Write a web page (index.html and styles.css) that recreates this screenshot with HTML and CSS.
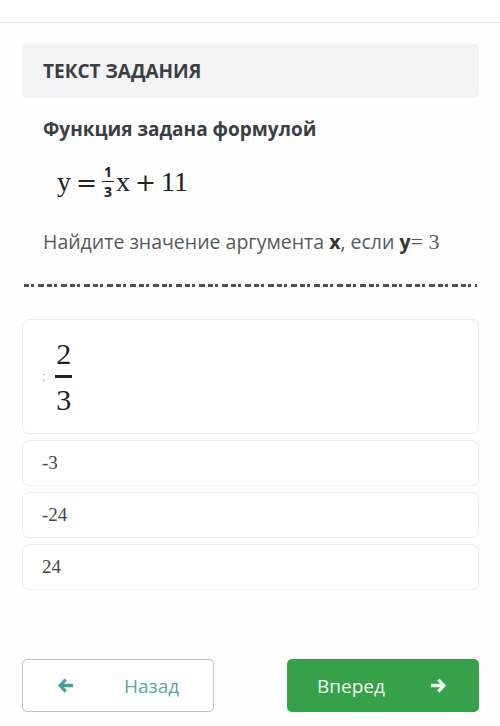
FILE: index.html
```html
<!DOCTYPE html>
<html lang="ru">
<head>
    <meta charset="UTF-8">
    <meta name="viewport" content="width=device-width, initial-scale=1.0">
    <title>Текст задания</title>
    <link rel="stylesheet" href="styles.css">
</head>
<body>
    <div class="top-bar"></div>

    <div class="task">
        <div class="task-header">ТЕКСТ ЗАДАНИЯ</div>

        <div class="task-body">
            <div class="task-title">Функция задана формулой</div>

            <div class="formula">
                <span>y</span>
                <span class="op">=</span>
                <span class="frac small">
                    <span class="num">1</span>
                    <span class="den">3</span>
                </span>
                <span>x</span>
                <span class="op">+</span>
                <span>11</span>
            </div>

            <p class="question">Найдите значение аргумента <b>x</b>, если <b>y</b><span class="math">= 3</span></p>
        </div>

        <div class="separator"></div>

        <div class="answers">
            <div class="answer answer-tall">
                <span class="dots">:</span>
                <span class="frac big">
                    <span class="num">2</span>
                    <span class="den">3</span>
                </span>
            </div>
            <div class="answer">-3</div>
            <div class="answer">-24</div>
            <div class="answer">24</div>
        </div>

        <div class="nav">
            <button class="btn btn-back">
                <svg viewBox="0 0 20 20" width="19" height="19">
                    <path d="M9 2.5 L2 10 L9 17.5 L11.5 15 L8.2 11.8 H18 V8.2 H8.2 L11.5 5 Z" fill="currentColor"/>
                </svg>
                <span>Назад</span>
            </button>
            <button class="btn btn-next">
                <span>Вперед</span>
                <svg viewBox="0 0 20 20" width="19" height="19">
                    <path d="M11 2.5 L18 10 L11 17.5 L8.5 15 L11.8 11.8 H2 V8.2 H11.8 L8.5 5 Z" fill="currentColor"/>
                </svg>
            </button>
        </div>
    </div>
</body>
</html>
```

FILE: styles.css
```css
body {
    margin: 0;
    background: #fdfdfd;
    font-family: 'Open Sans', 'Noto Sans', sans-serif;
    color: #3b4045;
}

.top-bar {
    height: 22px;
    border-bottom: 1px solid #e3e4e6;
    background: #fff;
}

.task {
    padding: 21px 21px 0 22px;
}

.task-header {
    height: 54px;
    display: flex;
    align-items: center;
    padding-left: 21px;
    background: #f1f3f5;
    border-radius: 5px;
    font-size: 19px;
    font-weight: bold;
    color: #3a3f43;
}

.task-body {
    padding: 0 21px;
}

.task-title {
    margin-top: 18px;
    font-size: 19px;
    font-weight: bold;
    color: #3a3f43;
}

.formula {
    display: flex;
    align-items: center;
    gap: 4px;
    margin: 23px 0 0 14px;
    font-family: 'Liberation Serif', 'DejaVu Serif', serif;
    font-size: 28px;
    color: #222;
}

.formula .op {
    margin: 0 1px;
    font-family: 'DejaVu Serif', serif;
    font-size: 25px;
}

.frac {
    display: inline-flex;
    flex-direction: column;
    align-items: center;
    line-height: 1;
}

.frac .num {
    border-bottom: 1px solid #222;
}

.frac.small {
    font-family: 'Open Sans', sans-serif;
    font-size: 14px;
    font-weight: bold;
    margin-right: -2px;
}

.frac.small .num {
    padding: 0 2px 2px;
}

.frac.small .den {
    padding-top: 3px;
}

.question {
    margin: 29px 0 0;
    font-size: 19.5px;
    color: #555a5e;
}

.question b {
    color: #333;
}

.question .math {
    font-family: 'Liberation Serif', serif;
    font-size: 22px;
}

.separator {
    height: 3px;
    margin: 29px 2px 0 2px;
    background:
        repeating-linear-gradient(90deg, #333 0 5px, transparent 5px 7px, #333 7px 10px, transparent 10px 14px, #333 14px 20px, transparent 20px 23px),
        #fff;
    opacity: 0.85;
}

.answers {
    display: flex;
    flex-direction: column;
    gap: 6px;
    margin-top: 32px;
}

.answer {
    display: flex;
    align-items: center;
    height: 44px;
    padding-left: 19px;
    border: 1px solid #ececec;
    border-radius: 7px;
    background: #fff;
    font-family: 'Liberation Serif', 'DejaVu Serif', serif;
    font-size: 19px;
    color: #444;
}

.answer-tall {
    height: 113px;
}

.answer .dots {
    font-family: sans-serif;
    font-size: 12px;
    color: #999;
    margin-right: 10px;
}

.frac.big {
    font-family: 'Liberation Serif', serif;
    font-size: 30px;
    color: #222;
}

.frac.big .num {
    border-bottom: 3px solid #222;
    padding: 0 1px 6px;
}

.frac.big .den {
    padding-top: 7px;
}

.nav {
    display: flex;
    justify-content: space-between;
    margin-top: 69px;
}

.btn {
    width: 192px;
    height: 53px;
    display: flex;
    align-items: center;
    border-radius: 5px;
    font-family: 'Open Sans', sans-serif;
    font-size: 19px;
    cursor: pointer;
}

.btn-back {
    padding: 0 0 0 33px;
    gap: 49px;
    background: #fff;
    border: 1px solid #b8c4c6;
    color: #5aa4a8;
}

.btn-back svg {
    color: #45a0a6;
}

.btn-next {
    padding: 0 0 0 30px;
    gap: 44px;
    background: #36a14a;
    border: none;
    color: #eef8ee;
}
```
